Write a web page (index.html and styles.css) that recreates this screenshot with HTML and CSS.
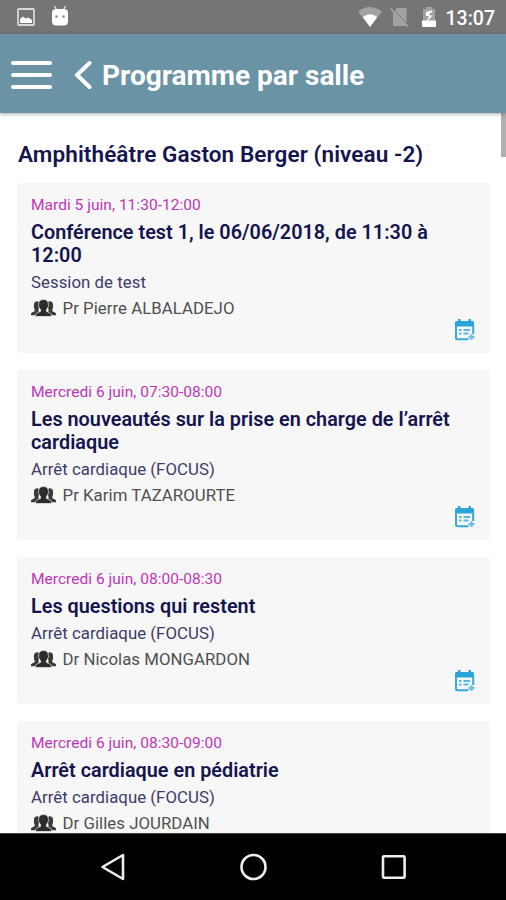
FILE: index.html
```html
<!DOCTYPE html>
<html lang="fr">
<head>
  <meta charset="UTF-8" />
  <title>Programme par salle</title>
  <link rel="stylesheet" href="styles.css">
</head>
<body>
  <svg class="sprite">
    <symbol id="people" viewBox="0 0 26 18">
      <g class="side">
        <path d="M6.500 2c1.600 0 2.500 1.300 2.500 3.800 0 2-.5 3.200-1.200 4.200v2.500L10 16.500H0v-1.700c0-1.300 2.600-1.500 3.800-2.500v-1.700C3.300 9.700 3 8.200 3 6.300 3 3.500 4.300 2 6.500 2z"/>
        <path d="M19.500 2C17.900 2 17 3.300 17 5.800c0 2 .5 3.200 1.200 4.200v2.500L16 16.500h10v-1.700c0-1.300-2.600-1.500-3.800-2.500v-1.700c.5-.9.8-2.400.8-4.300C23 3.500 21.700 2 19.500 2z"/>
      </g>
      <path class="front" d="M13 .2c3.400 0 5.300 1.800 5 5.200.5.300.3 2.200-.4 2.600-.3 1.300-1 2.200-1.600 2.800v1.700c1.300 1 5.300 1.500 5.300 3.800v1.500H4.700v-1.500c0-2.300 4-2.800 5.300-3.800v-1.700c-.6-.6-1.300-1.500-1.600-2.800-.7-.4-.9-2.300-.4-2.600C7.700 2 9.600.2 13 .2z"/>
    </symbol>
    <symbol id="calendar" viewBox="0 0 22 24">
      <path class="cal-top" d="M2.500 3h1.500V1h2.500v2h8V1H17v2h1.500A1.500 1.500 0 0 1 20 4.500V8.500H1V4.500A1.500 1.500 0 0 1 2.500 3z"/>
      <path class="cal-box" d="M2 7.500v12.200a1.500 1.500 0 0 0 1.500 1.500h11M19.200 7.500v8.500"/>
      <path class="cal-lines" d="M5 12h2.500M9.500 12h6.500M5 15.500h2.500M9.500 15.500h5"/>
      <path class="cal-plus" d="M17.500 16.300v5.800M14.500 19.200h6"/>
    </symbol>
  </svg>

  <div class="screen">
    <div class="statusbar">
      <svg class="ic-picture" width="18" height="18" viewBox="0 0 18 18">
        <rect x="1" y="1" width="16" height="16" rx="1"/>
        <path d="M3 15v-4l3-2.500 2.500 2 3-1 3.500 2.500v3z"/>
      </svg>
      <svg class="ic-droid" width="18" height="20" viewBox="0 0 18 20">
        <path d="M3.500 0l2 4M14.500 0l-2 4"/>
        <rect x="1" y="3" width="16" height="16.500" rx="4"/>
        <circle cx="5.500" cy="10.500" r="1.200"/>
        <circle cx="12.500" cy="10.500" r="1.200"/>
      </svg>
      <div class="status-right">
        <svg class="ic-wifi" width="24" height="20" viewBox="0 0 24 20">
          <path class="dim" d="M0 4.500Q12-4.500 24 4.500L12 20z"/>
          <path d="M4.800 10Q12 4.500 19.200 10L12 20z"/>
        </svg>
        <svg class="ic-sim" width="20" height="20" viewBox="0 0 20 20">
          <path class="dim" d="M7 1h8.500a1 1 0 0 1 1 1v16a1 1 0 0 1-1 1H4a1 1 0 0 1-1-1V5z"/>
          <path class="gap" d="M2 1.500l17 18"/>
          <path class="slash" d="M.8 1.500l17 18"/>
        </svg>
        <svg class="ic-battery" width="14" height="20" viewBox="0 0 14 20">
          <path class="dim" d="M1 2h3V0h6v2h3v12H1z"/>
          <path d="M0 13.500h14V19a1 1 0 0 1-1 1H1a1 1 0 0 1-1-1z"/>
          <path d="M9.500 3.500L4 5v4h3l-2.500 6 6-6.500H7.500V6l3-.8z"/>
        </svg>
        <span class="clock">13:07</span>
      </div>
    </div>

    <header class="topbar">
      <div class="burger"><i></i><i></i><i></i></div>
      <svg class="back" width="18" height="30" viewBox="0 0 18 30">
        <path d="M15.500 3L3 15l12.500 12"/>
      </svg>
      <h1>Programme par salle</h1>
    </header>

    <main class="content">
      <div class="scrollbar"></div>
      <h2>Amphithéâtre Gaston Berger (niveau -2)</h2>

      <div class="card">
        <p class="date">Mardi 5 juin, 11:30-12:00</p>
        <h3>Conférence test 1, le 06/06/2018, de 11:30 à 12:00</h3>
        <p class="session">Session de test</p>
        <p class="speaker"><svg class="people"><use href="#people"/></svg><span>Pr Pierre ALBALADEJO</span></p>
        <svg class="calendar"><use href="#calendar"/></svg>
      </div>

      <div class="card">
        <p class="date">Mercredi 6 juin, 07:30-08:00</p>
        <h3>Les nouveautés sur la prise en charge de l’arrêt cardiaque</h3>
        <p class="session">Arrêt cardiaque (FOCUS)</p>
        <p class="speaker"><svg class="people"><use href="#people"/></svg><span>Pr Karim TAZAROURTE</span></p>
        <svg class="calendar"><use href="#calendar"/></svg>
      </div>

      <div class="card">
        <p class="date">Mercredi 6 juin, 08:00-08:30</p>
        <h3>Les questions qui restent</h3>
        <p class="session">Arrêt cardiaque (FOCUS)</p>
        <p class="speaker"><svg class="people"><use href="#people"/></svg><span>Dr Nicolas MONGARDON</span></p>
        <svg class="calendar"><use href="#calendar"/></svg>
      </div>

      <div class="card">
        <p class="date">Mercredi 6 juin, 08:30-09:00</p>
        <h3>Arrêt cardiaque en pédiatrie</h3>
        <p class="session">Arrêt cardiaque (FOCUS)</p>
        <p class="speaker"><svg class="people"><use href="#people"/></svg><span>Dr Gilles JOURDAIN</span></p>
      </div>
    </main>

    <nav class="navbar">
      <svg width="28" height="30" viewBox="0 0 28 30"><path d="M24 3v24L3.500 15z"/></svg>
      <svg width="28" height="30" viewBox="0 0 28 30"><circle cx="14.500" cy="15" r="12"/></svg>
      <svg width="28" height="30" viewBox="0 0 28 30"><rect x="4" y="4.200" width="21.600" height="21.600" rx="1"/></svg>
    </nav>
  </div>
</body>
</html>
```
FILE: styles.css
```css
* {
  box-sizing: border-box;
  margin: 0;
  padding: 0;
}
body {
  font-family: Roboto, "Liberation Sans", sans-serif;
  background: #fff;
}
svg {
  display: block;
  flex: none;
}
.sprite {
  width: 0;
  height: 0;
  position: absolute;
}
.screen {
  width: 506px;
  height: 900px;
  display: flex;
  flex-direction: column;
  overflow: hidden;
}

/* status bar */
.statusbar {
  flex: none;
  height: 34px;
  background: #757575;
  display: flex;
  align-items: center;
  padding: 0 11px 0 17px;
}
.ic-picture rect {
  fill: none;
  stroke: #d8d8d8;
  stroke-width: 1.8;
}
.ic-picture path {
  fill: #fff;
}
.ic-droid {
  margin: -3px 0 0 16px;
}
.ic-droid path {
  stroke: #d5d5d5;
  stroke-width: 1.5;
}
.ic-droid rect {
  fill: #fff;
}
.ic-droid circle {
  fill: #8a8a8a;
}
.status-right {
  margin-left: auto;
  display: flex;
  align-items: center;
  fill: #fff;
}
.dim {
  fill: #a2a2a2;
}
.ic-sim {
  margin-left: 8px;
}
.ic-sim .gap {
  stroke: #757575;
  stroke-width: 1.5;
}
.ic-sim .slash {
  stroke: #a8a8a8;
  stroke-width: 1.6;
}
.ic-battery {
  margin-left: 12px;
}
.clock {
  margin-left: 10px;
  padding-top: 3px;
  color: #fff;
  font-size: 19.5px;
  font-weight: 500;
  line-height: 34px;
}

/* header */
.topbar {
  flex: none;
  height: 79px;
  background: #6a94a5;
  display: flex;
  align-items: center;
  padding: 2px 0 0 11px;
  position: relative;
  z-index: 1;
  box-shadow: 0 1px 4px rgba(0,0,0,0.35);
}
.burger {
  width: 41px;
  display: grid;
  gap: 8px;
}
.burger i {
  height: 4px;
  border-radius: 2px;
  background: #fff;
}
.back {
  margin-left: 22px;
  fill: none;
  stroke: #fff;
  stroke-width: 4;
  stroke-linecap: round;
  stroke-linejoin: round;
}
h1 {
  margin-left: 10px;
  padding-top: 3px;
  color: #fff;
  font-size: 28px;
  font-weight: 700;
  line-height: 36px;
  white-space: nowrap;
}

/* programme */
.content {
  flex: 1;
  min-height: 0;
  overflow: hidden;
  position: relative;
  padding: 27px 17px 0 18px;
}
.scrollbar {
  position: absolute;
  top: 0;
  right: 0;
  width: 5px;
  height: 44px;
  background: #b0b0b0;
}
h2 {
  color: #14144f;
  font-size: 22.5px;
  font-weight: 600;
  letter-spacing: 0.1px;
  line-height: 28px;
  margin-bottom: 14.5px;
  white-space: nowrap;
}
.card {
  width: 473px;
  background: #f7f7f7;
  border-radius: 3px;
  padding: 11.5px 14px 11px;
  margin: 0 0 17px -1px;
}
.date {
  color: #c035b5;
  font-size: 15.5px;
  font-weight: 370;
  letter-spacing: 0.03px;
  line-height: 22px;
}
h3 {
  margin: 4.5px 0 4.5px;
  color: #14144f;
  font-size: 19.8px;
  font-weight: 600;
  letter-spacing: 0.03px;
  line-height: 23px;
}
.session {
  color: #3c3c68;
  font-size: 16.8px;
  font-weight: 370;
  letter-spacing: 0.04px;
  line-height: 22px;
}
.speaker {
  display: flex;
  align-items: center;
  gap: 6.5px;
  margin-top: 3.5px;
  color: #505050;
  font-size: 16.8px;
  font-weight: 370;
  letter-spacing: 0.04px;
  line-height: 22px;
}
.people {
  width: 25px;
  height: 18px;
}
.side {
  fill: #3a3a3a;
}
.front {
  fill: #2c2c2c;
  stroke: #f7f7f7;
  stroke-width: 0.7;
}
.calendar {
  width: 22px;
  height: 24px;
  margin: -0.5px 0 -0.5px auto;
}
.cal-top {
  fill: #2ba3d8;
}
.cal-box {
  fill: none;
  stroke: #35a9da;
  stroke-width: 2;
}
.cal-lines {
  stroke: #58b8e0;
  stroke-width: 2;
}
.cal-plus {
  stroke: #6cc0e4;
  stroke-width: 2.2;
}

/* android buttons */
.navbar {
  flex: none;
  height: 67px;
  background: #000;
  border-top: 1px solid #444;
  display: flex;
  justify-content: center;
  align-items: center;
  gap: 112px;
}
.navbar svg {
  fill: none;
  stroke: #eee;
  stroke-width: 2.6;
  stroke-linejoin: round;
}
```
